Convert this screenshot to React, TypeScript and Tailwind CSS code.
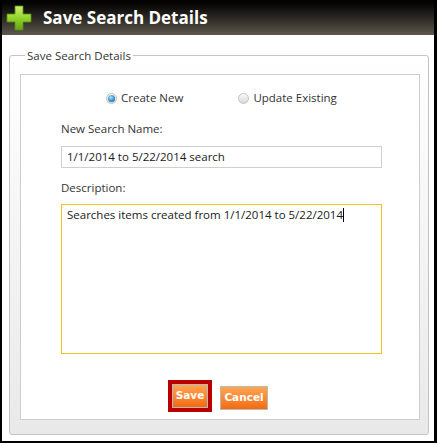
function PlusIcon() {
  return (
    <svg width="26" height="26" viewBox="0 0 26 26">
      <defs>
        <linearGradient id="plusG" x1="0" y1="0" x2="0" y2="1">
          <stop offset="0" stopColor="#c8f26c" />
          <stop offset="0.5" stopColor="#94d42c" />
          <stop offset="1" stopColor="#62a214" />
        </linearGradient>
      </defs>
      <path
        d="M9 1h8v8h8v8h-8v8H9v-8H1V9h8z"
        fill="url(#plusG)"
        stroke="#548f10"
        strokeWidth="0.8"
      />
    </svg>
  );
}

function Radio({ checked, label }: { checked?: boolean; label: string }) {
  return (
    <label className="flex items-center gap-[4px]">
      <span className="w-[11px] h-[11px] rounded-full border border-[#c2c2c2] bg-gradient-to-b from-[#fafafa] to-[#d9d9d9] flex items-center justify-center">
        {checked && (
          <span className="w-[7px] h-[7px] rounded-full bg-[radial-gradient(circle_at_40%_35%,#a8e2ff,#2f8cc8_60%,#0e4d7e)]" />
        )}
      </span>
      <span>{label}</span>
    </label>
  );
}

export default function App() {
  return (
    <div
      className="w-[437px] h-[443px] bg-white border-l-2 border-r-[3px] border-b-2 border-black flex flex-col text-[11.5px] text-[#1a1a1a]"
      style={{ fontFamily: '"Open Sans", "Noto Sans", sans-serif' }}
    >
      <div className="h-[35px] shrink-0 bg-gradient-to-b from-[#020202] to-[#5e584d] flex items-center pl-[4px] gap-[11px]">
        <PlusIcon />
        <span className="text-white font-bold text-[17px] leading-none">Save Search Details</span>
      </div>

      <div className="pt-[13px] pl-[7px]">
        <fieldset className="w-[420px] border border-[#c4c4c4] rounded-[3px] bg-gradient-to-b from-white via-[#f4f4f4] to-[#e9e9e9] pl-[10px] pr-[8px] pt-[11px] pb-[14px]">
          <legend className="ml-[5px] px-[2px] leading-[15px] text-[#333]">Save Search Details</legend>
          <div className="w-[400px] h-[346px] bg-white border border-[#cdcdcd] flex flex-col pl-[40px] pt-[15px]">
            <div className="flex items-center h-[16px] pl-[45px] gap-[55px] text-[#333]">
              <Radio checked label="Create New" />
              <Radio label="Update Existing" />
            </div>

            <div className="mt-[15px] leading-[16px] text-[#333]">New Search Name:</div>
            <div className="mt-[9px] w-[321px] h-[22px] border border-[#cfcfcf] flex items-center pl-[5px]">
              1/1/2014 to 5/22/2014 search
            </div>

            <div className="mt-[12px] leading-[16px] text-[#333]">Description:</div>
            <div className="mt-[8px] w-[321px] h-[150px] border border-[#f2c31c] pl-[5px] pt-[2px] leading-[16px]">
              Searches items created from 1/1/2014 to 5/22/2014
              <span className="inline-block w-px h-[14px] bg-black align-[-3px]" />
            </div>

            <div className="mt-[30px] flex items-start justify-center gap-[12px] pr-[40px]">
              <button
                className="h-[24px] w-[36px] border border-[#b9b9b9] bg-gradient-to-b from-[#ffa550] to-[#f36a0c] text-white font-bold text-[10.5px] outline-[4px] outline outline-[#b80000]"
                style={{ fontFamily: '"DejaVu Sans", sans-serif' }}
              >
                Save
              </button>
              <button
                className="mt-[2px] h-[24px] w-[48px] border border-[#b9b9b9] bg-gradient-to-b from-[#ffa550] to-[#f36a0c] text-white font-bold text-[10.5px]"
                style={{ fontFamily: '"DejaVu Sans", sans-serif' }}
              >
                Cancel
              </button>
            </div>
          </div>
        </fieldset>
      </div>
    </div>
  );
}
